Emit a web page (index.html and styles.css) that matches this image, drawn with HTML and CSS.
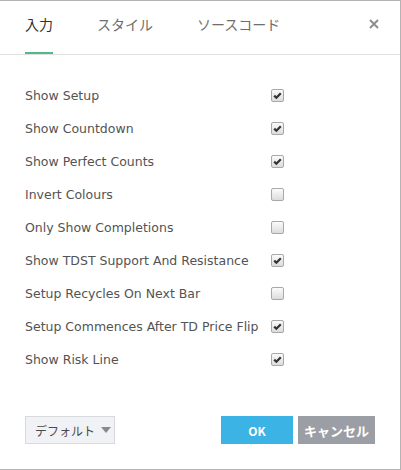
FILE: index.html
```html
<!DOCTYPE html>
<html lang="ja">
<head>
    <meta charset="UTF-8">
    <title>設定</title>
    <link rel="stylesheet" href="styles.css">
</head>
<body>
    <div class="dialog">
        <div class="tabs">
            <span class="tab active">入力</span>
            <span class="tab">スタイル</span>
            <span class="tab">ソースコード</span>
            <span class="close">
                <svg width="10" height="10" viewBox="0 0 10 10"><path d="M1 1L9 9M9 1L1 9" stroke="#8e8e8e" stroke-width="2"/></svg>
            </span>
        </div>

        <div class="options">
            <label class="row"><span class="name">Show Setup</span><input type="checkbox" checked></label>
            <label class="row"><span class="name">Show Countdown</span><input type="checkbox" checked></label>
            <label class="row"><span class="name">Show Perfect Counts</span><input type="checkbox" checked></label>
            <label class="row"><span class="name">Invert Colours</span><input type="checkbox"></label>
            <label class="row"><span class="name">Only Show Completions</span><input type="checkbox"></label>
            <label class="row"><span class="name">Show TDST Support And Resistance</span><input type="checkbox" checked></label>
            <label class="row"><span class="name">Setup Recycles On Next Bar</span><input type="checkbox"></label>
            <label class="row"><span class="name">Setup Commences After TD Price Flip</span><input type="checkbox" checked></label>
            <label class="row"><span class="name">Show Risk Line</span><input type="checkbox" checked></label>
        </div>

        <div class="footer">
            <button class="btn-default">デフォルト<span class="arrow"></span></button>
            <button class="btn-ok">OK</button>
            <button class="btn-cancel">キャンセル</button>
        </div>
    </div>
</body>
</html>
```

FILE: styles.css
```css
body{
    margin: 0;
    font-family: "DejaVu Sans", "Noto Sans CJK JP", sans-serif;
}
.dialog{
    width: 401px;
    height: 470px;
    box-sizing: border-box;
    border: 1px solid #b4b4b4;
    border-left: none;
    background: #fff;
    display: flex;
    flex-direction: column;
}
.tabs{
    height: 54px;
    box-sizing: border-box;
    border-bottom: 1px solid #e0e0e0;
    display: flex;
    padding: 0 21px 0 25px;
    font-family: "Noto Sans CJK JP", sans-serif;
    font-size: 14px;
}
.tab{
    height: 53px;
    box-sizing: border-box;
    padding-top: 13px;
    line-height: 20px;
    margin-right: 44px;
    color: #6e6e6e;
}
.tab.active{
    color: #333;
    border-bottom: 2px solid #53b987;
}
.close{
    margin-left: auto;
    padding-top: 18px;
}
.close svg{
    display: block;
}
.options{
    padding: 24px 25px 0 25px;
}
.row{
    display: flex;
    align-items: center;
    height: 33px;
    font-size: 12.5px;
    color: #535353;
}
.row .name{
    width: 246px;
}
.row input{
    appearance: none;
    margin: 0;
    width: 13px;
    height: 13px;
    box-sizing: border-box;
    border: 1px solid #a8a8a8;
    border-radius: 2px;
    background: linear-gradient(#fbfbfb, #dcdcdc);
}
.row input:checked{
    background: url("data:image/svg+xml;utf8,<svg xmlns='http://www.w3.org/2000/svg' width='11' height='11'><path d='M2.2 5.6L4.4 7.8L8.8 3.2' stroke='%23333' stroke-width='2.2' fill='none'/></svg>") no-repeat center, linear-gradient(#fbfbfb, #dcdcdc);
}
.footer{
    margin-top: auto;
    display: flex;
    padding: 0 25px 25px 25px;
    font-family: "Noto Sans CJK JP", sans-serif;
}
.footer button{
    height: 28px;
    border: none;
    font-family: inherit;
    padding: 0;
}
.btn-default{
    width: 90px;
    background: #f1f2f6;
    border: 1px solid #d9dade !important;
    color: #4a4a4a;
    font-size: 12px;
    margin-right: auto;
    display: flex;
    align-items: center;
    padding-left: 9px !important;
    gap: 6px;
}
.arrow{
    width: 0;
    height: 0;
    border-left: 5px solid transparent;
    border-right: 5px solid transparent;
    border-top: 6px solid #8a8a8a;
}
.btn-ok{
    width: 72px;
    background: #3bb3e4;
    color: #fff;
    font-weight: bold;
    font-size: 12px;
    margin-right: 5px;
}
.btn-cancel{
    width: 77px;
    background: #9c9ea5;
    color: #fff;
    font-weight: bold;
    font-size: 13px;
}
```
